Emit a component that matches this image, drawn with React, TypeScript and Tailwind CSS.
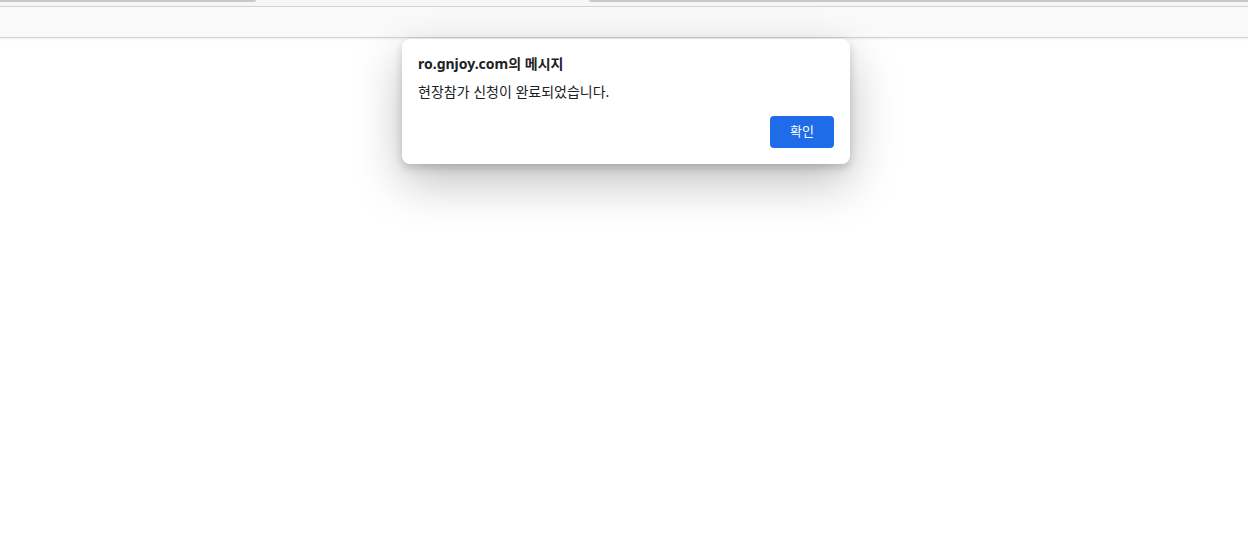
export default function App() {
  return (
    <div className="relative h-[542px] w-[1248px] overflow-hidden bg-white font-['Noto_Sans','Noto_Sans_CJK_KR',sans-serif]">
      {/* tab strip remnant */}
      <div className="flex h-[6px] items-start bg-[#f6f6f6]">
        <div className="h-[2px] w-[256px] rounded-br-[2px] bg-[#c9c9c9]" />
        <div className="flex-1" />
        <div className="h-[2px] w-[659px] rounded-bl-[2px] bg-[#c9c9c9]" />
      </div>
      {/* toolbar */}
      <div className="h-[32px] border-y border-[#d2d2d2] bg-[#fafafa]" />
      <div className="h-[3px] bg-gradient-to-b from-[#f2f2f2] to-white" />

      {/* alert dialog */}
      <div className="absolute left-[402px] top-[39px] w-[448px] rounded-[8px] bg-white px-[16px] pt-[16px] pb-[16px] shadow-[0_18px_48px_rgba(0,0,0,0.25),0_4px_10px_rgba(0,0,0,0.18)]">
        <div className="text-[14px] font-bold leading-[18px] text-[#202124]">ro.gnjoy.com의 메시지</div>
        <div className="mt-[10px] text-[14px] leading-[18px] text-[#202124]">현장참가 신청이 완료되었습니다.</div>
        <div className="mt-[15px] flex justify-end">
          <button className="h-[32px] w-[64px] rounded-[4px] bg-[#1f6ce9] text-[13px] text-white">확인</button>
        </div>
      </div>
    </div>
  );
}
